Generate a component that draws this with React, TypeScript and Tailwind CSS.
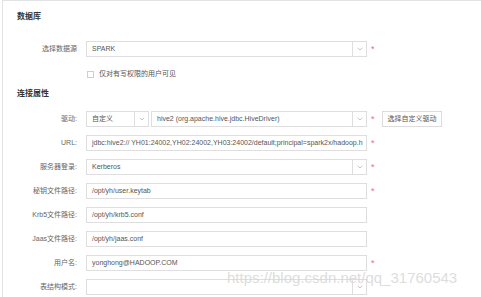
import type { ReactNode } from 'react';

const font = { fontFamily: '"Liberation Sans", "Noto Sans CJK SC", Arial, sans-serif' };

function Chevron() {
  return (
    <svg width="6" height="4" viewBox="0 0 6 4" aria-hidden="true">
      <polyline points="0.8,0.8 3,3 5.2,0.8" fill="none" stroke="#b5b5b5" strokeWidth="0.8" />
    </svg>
  );
}

function Required() {
  return <span className="ml-[4px] w-[6px] text-[9px] leading-none text-[#e86b86]">*</span>;
}

function Field({ label, children }: { label: string; children: ReactNode }) {
  return (
    <div className="flex h-[16px] items-center">
      <div className="mr-[9px] w-[74px] text-right text-[7px] text-[#666]">{label}</div>
      {children}
    </div>
  );
}

function Input({ value, select, width = 281 }: { value?: string; select?: boolean; width?: number }) {
  return (
    <div
      className="flex h-[16px] shrink-0 items-center overflow-hidden border border-[#dedede] bg-white"
      style={{ width }}
    >
      <div className="min-w-0 flex-1 overflow-hidden text-clip whitespace-nowrap pl-[5px] text-[7px] text-[#555]">
        {value}
      </div>
      {select ? (
        <div className="flex h-full w-[14px] shrink-0 items-center justify-center border-l border-[#dedede]">
          <Chevron />
        </div>
      ) : null}
    </div>
  );
}

export default function App() {
  return (
    <div className="relative h-[297px] w-[481px] overflow-hidden bg-white" style={font}>
      <div className="ml-[2px] h-full border-l border-t border-[#e3e3e3]">
        <div className="pl-[14px] pt-[11px] text-[8px] font-bold leading-[10px] text-[#333]">数据库</div>

        <div className="mt-[19px]">
          <Field label="选择数据源">
            <Input value="SPARK" select />
            <Required />
          </Field>
        </div>

        <div className="ml-[84px] mt-[13px] flex items-center">
          <span className="h-[7px] w-[7px] border border-[#cfcfcf] bg-white" />
          <span className="ml-[5px] text-[7px] leading-[8px] text-[#555]">仅对有写权限的用户可见</span>
        </div>

        <div className="mt-[11px] pl-[14px] text-[8px] font-bold leading-[10px] text-[#333]">连接属性</div>

        <div className="mt-[12px] flex flex-col gap-[8px]">
          <Field label="驱动:">
            <Input value="自定义" select width={63} />
            <div className="w-[2px]" />
            <Input value="hive2 (org.apache.hive.jdbc.HiveDriver)" select width={216} />
            <Required />
            <button
              type="button"
              className="ml-[5px] flex h-[16px] w-[60px] items-center justify-center border border-[#dcdcdc] bg-white text-[7px] text-[#555]"
            >
              选择自定义驱动
            </button>
          </Field>
          <Field label="URL:">
            <Input value="jdbc:hive2:// YH01:24002,YH02:24002,YH03:24002/default;principal=spark2x/hadoop.h" />
            <Required />
          </Field>
          <Field label="服务器登录:">
            <Input value="Kerberos" select />
            <Required />
          </Field>
          <Field label="秘钥文件路径:">
            <Input value="/opt/yh/user.keytab" />
            <Required />
          </Field>
          <Field label="Krb5文件路径:">
            <Input value="/opt/yh/krb5.conf" />
          </Field>
          <Field label="Jaas文件路径:">
            <Input value="/opt/yh/jaas.conf" />
          </Field>
          <Field label="用户名:">
            <Input value="yonghong@HADOOP.COM" />
            <Required />
          </Field>
          <Field label="表结构模式:">
            <Input select />
          </Field>
        </div>
      </div>

      <div className="pointer-events-none absolute left-[227px] top-[268px] whitespace-nowrap text-[15px] leading-[20px] text-[#d4d4d4]/80">
        https://blog.csdn.net/qq_31760543
      </div>
    </div>
  );
}
